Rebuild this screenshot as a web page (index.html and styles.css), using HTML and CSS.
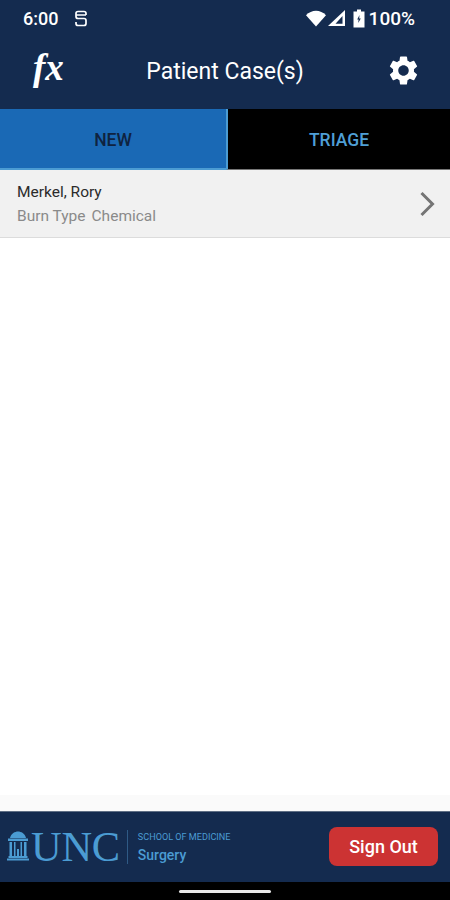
FILE: index.html
```html
<!DOCTYPE html>
<html lang="en">
<head>
<meta charset="utf-8">
<title>Patient Case(s)</title>
<link rel="stylesheet" href="styles.css">
</head>
<body>
<div class="app">
  <header class="top">
    <div class="status">
      <div class="status-left">
        <span class="time">6:00</span>
        <svg class="s-icon" width="14" height="17" viewBox="0 0 14 17"><path d="M12 5V3.500C12 2.300 11.200 1.500 10 1.500H4C2.800 1.500 2 2.300 2 3.500V6.500C2 7.700 2.800 8.500 4 8.500H10C11.200 8.500 12 9.300 12 10.500V13.500C12 14.700 11.200 15.500 10 15.500H4C2.800 15.500 2 14.700 2 13.500V12M2 5H12" fill="none" stroke="#fff" stroke-width="1.700"/></svg>
      </div>
      <div class="status-right">
        <svg width="20" height="17" viewBox="0 0 20 17"><path d="M0 5.200C5.500 -0.800 14.500 -0.800 20 5.200L10 16.500Z" fill="#fff"/></svg>
        <svg class="signal" width="17" height="16" viewBox="0 0 17 16"><path d="M17 0V16H0Z" fill="#fff"/><path d="M14.500 6V13.800H7.500Z" fill="#142b4f"/></svg>
        <svg class="batt" width="12" height="19" viewBox="0 0 12 19"><path d="M4 0.500H8V2.500H11.500V18.500H0.500V2.500H4Z" fill="#fff"/><path d="M6.500 6L4.200 10.600H5.600L5.200 14L7.800 9.400H6.200Z" fill="#142b4f"/></svg>
        <span class="pct">100%</span>
      </div>
    </div>
    <div class="bar">
      <span class="fx">fx</span>
      <h1 class="title">Patient Case(s)</h1>
      <svg class="gear" width="35" height="35" viewBox="0 0 24 24"><path fill="#fff" d="M19.14 12.94c.04-.3.06-.61.06-.94 0-.32-.02-.64-.07-.94l2.03-1.58a.49.49 0 0 0 .12-.61l-1.92-3.32a.488.488 0 0 0-.59-.22l-2.39.96c-.5-.38-1.03-.7-1.62-.94l-.36-2.54a.484.484 0 0 0-.48-.41h-3.84c-.24 0-.43.17-.47.41l-.36 2.54c-.59.24-1.13.57-1.62.94l-2.39-.96c-.22-.08-.47 0-.59.22L2.74 8.87c-.12.21-.08.47.12.61l2.03 1.58c-.05.3-.09.63-.09.94s.02.64.07.94l-2.03 1.58a.49.49 0 0 0-.12.61l1.92 3.32c.12.22.37.29.59.22l2.39-.96c.5.38 1.03.7 1.62.94l.36 2.54c.05.24.24.41.48.41h3.84c.24 0 .44-.17.47-.41l.36-2.54c.59-.24 1.13-.56 1.62-.94l2.39.96c.22.08.47 0 .59-.22l1.92-3.32c.12-.22.07-.47-.12-.61l-2.01-1.58zM12 15.6c-1.98 0-3.6-1.62-3.6-3.6s1.62-3.6 3.6-3.6 3.6 1.62 3.6 3.6-1.62 3.6-3.6 3.6z"/></svg>
    </div>
  </header>

  <nav class="tabs">
    <div class="tab tab-new">NEW</div>
    <div class="tab tab-triage">TRIAGE</div>
  </nav>

  <main class="list">
    <div class="row">
      <div class="row-text">
        <div class="name">Merkel, Rory</div>
        <div class="meta"><span>Burn Type</span><span>Chemical</span></div>
      </div>
      <svg class="chev" width="18" height="28" viewBox="0 0 18 28"><path d="M3.500 3L14.500 14L3.500 25" fill="none" stroke="#757575" stroke-width="3"/></svg>
    </div>
  </main>

  <div class="strip"></div>

  <footer class="foot">
    <div class="brand">
      <svg class="well" width="22" height="30" viewBox="0 0 22 30"><g fill="#4b9cd3"><path d="M3 7C4 2.500 8 0.500 11 0.500S18 2.500 19 7Z"/><rect x="1" y="7.500" width="20" height="2.500"/><rect x="2.500" y="11" width="2.500" height="14"/><rect x="7" y="11" width="1.500" height="14"/><rect x="10" y="18" width="2" height="7"/><rect x="13.500" y="11" width="1.500" height="14"/><rect x="17" y="11" width="2.500" height="14"/><rect x="1.500" y="25" width="19" height="2"/><rect x="0" y="27.500" width="22" height="2"/></g></svg>
      <span class="unc">UNC</span>
      <span class="divider"></span>
      <div class="school">
        <span class="som">SCHOOL OF MEDICINE</span>
        <span class="surgery">Surgery</span>
      </div>
    </div>
    <button class="signout">Sign Out</button>
  </footer>

  <div class="navbar"><span class="pill"></span></div>
</div>
</body>
</html>
```

FILE: styles.css
```css
* { box-sizing: border-box; }
html, body { margin: 0; padding: 0; background: #fff; }
body { font-family: Roboto, "Liberation Sans", sans-serif; }

.app {
  width: 450px;
  height: 900px;
  display: flex;
  flex-direction: column;
  overflow: hidden;
}

.top { background: #142b4f; height: 109px; flex: none; color: #fff; }

.status {
  height: 36px;
  padding: 0 35px 0 23px;
  display: flex;
  align-items: center;
  justify-content: space-between;
}
.status-left { display: flex; align-items: center; gap: 16px; }
.time { font-size: 18px; font-weight: 500; }
.status-right { display: flex; align-items: center; gap: 2px; }
.batt { margin-left: 6px; }
.pct { font-size: 19px; font-weight: 500; margin-left: 2px; }

.bar {
  height: 73px;
  padding: 0 32px;
  display: grid;
  grid-template-columns: 1fr auto 1fr;
  align-items: start;
}
.fx {
  font-family: "Liberation Serif", serif;
  font-style: italic;
  font-weight: 700;
  font-size: 37px;
  line-height: 40px;
  margin-top: 12px;
  margin-left: 1px;
}
.title {
  margin: 22px 0 0;
  font-size: 23px;
  font-weight: 400;
  line-height: 28px;
}
.gear { justify-self: end; margin: 17px -3px 0 0; }

.tabs { display: flex; height: 61px; flex: none; }
.tab {
  flex: 1;
  display: flex;
  align-items: center;
  justify-content: center;
  font-size: 17.500px;
  font-weight: 500;
  padding-top: 2px;
}
.tab-new {
  background: #1a69b5;
  color: #0f2340;
  border-bottom: 2px solid #4b9cd3;
  flex: 0 0 226px;
}
.tab-triage {
  background: #000;
  color: #4f9fd6;
  border-left: 2px solid #4b9cd3;
  border-bottom: 1px solid #777;
}

.list { flex: 1; background: #fff; }
.row {
  height: 68px;
  background: #f1f1f1;
  border-bottom: 1px solid #dcdcdc;
  padding: 0 14px 0 17px;
  display: flex;
  align-items: center;
  justify-content: space-between;
}
.name { font-size: 15.500px; line-height: 20px; color: #2b2b2b; }
.meta {
  font-size: 15.500px;
  line-height: 20px;
  color: #8a8a8a;
  margin-top: 4px;
  display: flex;
  gap: 6px;
}

.strip { height: 16px; background: #fafafa; flex: none; }

.foot {
  height: 71px;
  flex: none;
  background: #142b4f;
  border-top: 1px solid #5f6f85;
  padding: 0 12px 0 7px;
  display: flex;
  align-items: center;
  justify-content: space-between;
}
.brand { display: flex; align-items: center; }
.well { margin-top: -2px; }
.unc {
  font-family: "Liberation Serif", serif;
  font-size: 42.500px;
  line-height: 40px;
  color: #4b9cd3;
  margin-left: 2px;
  letter-spacing: -0.300px;
}
.divider { width: 1px; height: 34px; background: #2f5a85; margin: 0 10px 0 7px; }
.school { display: flex; flex-direction: column; gap: 4px; }
.som { font-size: 9.100px; color: #4b9cd3; line-height: 11px; white-space: nowrap; }
.surgery { font-size: 14px; font-weight: 500; color: #4b9cd3; line-height: 16px; }

.signout {
  width: 109px;
  height: 39px;
  margin-bottom: 2px;
  border: 0;
  border-radius: 8px;
  background: #cc3333;
  color: #fff;
  font-family: inherit;
  font-size: 18px;
  font-weight: 500;
  padding: 0;
}

.navbar {
  height: 18px;
  flex: none;
  background: #000;
  display: flex;
  align-items: center;
  justify-content: center;
}
.pill { width: 92px; height: 3px; background: #e8e8e8; border-radius: 2px; }
```
